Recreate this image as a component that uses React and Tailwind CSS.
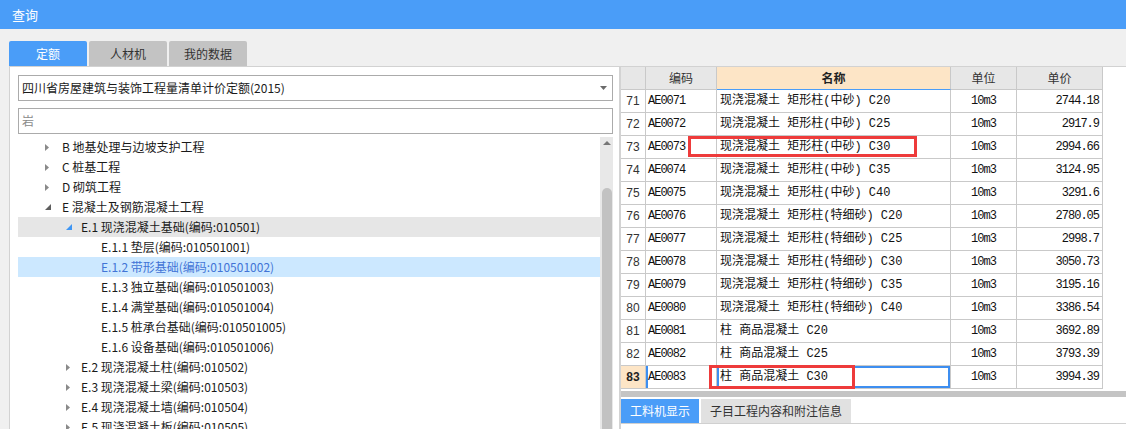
import React from "react";

const treeRows = [
  { lvl: 0, caret: "right", text: "B 地基处理与边坡支护工程" },
  { lvl: 0, caret: "right", text: "C 桩基工程" },
  { lvl: 0, caret: "right", text: "D 砌筑工程" },
  { lvl: 0, caret: "open", text: "E 混凝土及钢筋混凝土工程" },
  { lvl: 1, caret: "openBlue", text: "E.1 现浇混凝土基础(编码:010501)", hover: true },
  { lvl: 2, text: "E.1.1 垫层(编码:010501001)" },
  { lvl: 2, text: "E.1.2 带形基础(编码:010501002)", selected: true },
  { lvl: 2, text: "E.1.3 独立基础(编码:010501003)" },
  { lvl: 2, text: "E.1.4 满堂基础(编码:010501004)" },
  { lvl: 2, text: "E.1.5 桩承台基础(编码:010501005)" },
  { lvl: 2, text: "E.1.6 设备基础(编码:010501006)" },
  { lvl: 1, caret: "right", text: "E.2 现浇混凝土柱(编码:010502)" },
  { lvl: 1, caret: "right", text: "E.3 现浇混凝土梁(编码:010503)" },
  { lvl: 1, caret: "right", text: "E.4 现浇混凝土墙(编码:010504)" },
  { lvl: 1, caret: "right", text: "E.5 现浇混凝土板(编码:010505)" },
];

const tableRows = [
  ["71", "AE0071", "现浇混凝土 矩形柱(中砂) C20", "10m3", "2744.18"],
  ["72", "AE0072", "现浇混凝土 矩形柱(中砂) C25", "10m3", "2917.9"],
  ["73", "AE0073", "现浇混凝土 矩形柱(中砂) C30", "10m3", "2994.66"],
  ["74", "AE0074", "现浇混凝土 矩形柱(中砂) C35", "10m3", "3124.95"],
  ["75", "AE0075", "现浇混凝土 矩形柱(中砂) C40", "10m3", "3291.6"],
  ["76", "AE0076", "现浇混凝土 矩形柱(特细砂) C20", "10m3", "2780.05"],
  ["77", "AE0077", "现浇混凝土 矩形柱(特细砂) C25", "10m3", "2998.7"],
  ["78", "AE0078", "现浇混凝土 矩形柱(特细砂) C30", "10m3", "3050.73"],
  ["79", "AE0079", "现浇混凝土 矩形柱(特细砂) C35", "10m3", "3195.16"],
  ["80", "AE0080", "现浇混凝土 矩形柱(特细砂) C40", "10m3", "3386.54"],
  ["81", "AE0081", "柱 商品混凝土 C20", "10m3", "3692.89"],
  ["82", "AE0082", "柱 商品混凝土 C25", "10m3", "3793.39"],
  ["83", "AE0083", "柱 商品混凝土 C30", "10m3", "3994.39"],
];

function Caret({ type }) {
  if (type === "right")
    return (
      <svg width="4" height="7" viewBox="0 0 4 7">
        <path d="M0 0L4 3.5L0 7Z" fill="#8a8a8a" />
      </svg>
    );
  if (type === "open")
    return (
      <svg width="6" height="6" viewBox="0 0 6 6">
        <path d="M6 0V6H0Z" fill="#5e5e5e" />
      </svg>
    );
  return (
    <svg width="6" height="6" viewBox="0 0 6 6">
      <path d="M6 0V6H0Z" fill="#3f96f4" />
    </svg>
  );
}

function TreeRow({ row }) {
  const bg = row.selected ? "bg-[#cce8ff]" : row.hover ? "bg-[#e6e6e6]" : "";
  const color = row.selected ? "text-[#4274d6]" : "text-[#1a1a1a]";
  return (
    <div className={`h-[20px] flex items-center whitespace-nowrap ${bg}`}>
      {row.lvl === 0 && (
        <div className="ml-[27px] w-[17px] flex items-center">
          <Caret type={row.caret} />
        </div>
      )}
      {row.lvl === 1 && (
        <div className="ml-[48px] w-[15px] flex items-center">
          <Caret type={row.caret} />
        </div>
      )}
      {row.lvl === 2 && <div className="ml-[83px]" />}
      <span className={`text-[12px] leading-[20px] ${color}`}>{row.text}</span>
    </div>
  );
}

const mono = "font-['Liberation_Mono',monospace] text-[12px] tracking-[-1px] text-[#111]";
const nameFont = "font-['Liberation_Mono','Noto_Sans_CJK_SC',monospace] text-[12px] text-[#111]";

export default function App() {
  return (
    <div className="w-[1126px] h-[429px] overflow-hidden bg-[#f0f0f0] font-['Noto_Sans_CJK_SC','Noto_Sans',sans-serif] flex flex-col">
      {/* title bar */}
      <div className="h-[29px] shrink-0 bg-[#4a9df8] flex items-center pl-[12px] text-white text-[13px]">
        查询
      </div>

      {/* tabs */}
      <div className="mt-[12px] h-[25px] shrink-0 pl-[9px] flex gap-[2px]">
        <div className="w-[78px] h-full rounded-t-[2px] bg-[#4a9df8] text-white text-[12px] flex items-center justify-center">
          定额
        </div>
        <div className="w-[78px] h-full rounded-t-[2px] bg-[#c3c3c3] text-[#333] text-[12px] flex items-center justify-center">
          人材机
        </div>
        <div className="w-[78px] h-full rounded-t-[2px] bg-[#c3c3c3] text-[#333] text-[12px] flex items-center justify-center">
          我的数据
        </div>
      </div>

      {/* content */}
      <div className="flex-1 min-h-0 ml-[9px] border-l border-t border-[#d2d2d2] bg-white flex">
        {/* left panel */}
        <div className="w-[609px] shrink-0 flex flex-col pt-[8px] pl-[8px] pr-[6px] min-h-0">
          <div className="h-[26px] shrink-0 border border-[#ababab] flex items-center justify-between pl-[3px] pr-[5px]">
            <span className="text-[12px] text-[#1a1a1a] whitespace-nowrap">四川省房屋建筑与装饰工程量清单计价定额(2015)</span>
            <svg width="7" height="4" viewBox="0 0 7 4">
              <path d="M0 0H7L3.5 4Z" fill="#6b6b6b" />
            </svg>
          </div>
          <div className="mt-[7px] h-[26px] shrink-0 border border-[#ababab] flex items-center pl-[3px]">
            <span className="text-[12px] text-[#8a8a8a]">岩</span>
          </div>
          <div className="mt-[3px] flex-1 min-h-0 flex overflow-hidden">
            <div className="flex-1 min-w-0 overflow-hidden">
              {treeRows.map((r, i) => (
                <TreeRow key={i} row={r} />
              ))}
            </div>
            <div className="w-[13px] shrink-0 bg-[#e8e8e8] flex flex-col items-center">
              <div className="mt-[4px]">
                <svg width="8" height="4" viewBox="0 0 8 4">
                  <path d="M0 4H8L4 0Z" fill="#767676" />
                </svg>
              </div>
              <div className="mt-[43px] w-[10px] flex-1 rounded-t-[5px] bg-[#c2c2c2]" />
            </div>
          </div>
        </div>

        {/* separator */}
        <div className="w-[2px] shrink-0 bg-[#d3d3d3]" />

        {/* right panel */}
        <div className="flex-1 min-w-0 flex flex-col relative bg-white">
          <div className="w-[482px]">
            {/* header */}
            <div className="flex h-[23px]">
              <div className="w-[25px] bg-[#e7e7e7] border-r border-b border-[#c9c9c9]" />
              <div className="w-[71px] bg-[#e7e7e7] border-r border-b border-[#c9c9c9] flex items-center justify-center text-[12px] text-[#333]">
                编码
              </div>
              <div className="w-[234px] bg-[#fde5c6] border-r border-[#c9c9c9] border-b border-b-[#4a9df8] flex items-center justify-center text-[12px] font-bold text-[#222]">
                名称
              </div>
              <div className="w-[66px] bg-[#e7e7e7] border-r border-b border-[#c9c9c9] flex items-center justify-center text-[12px] text-[#333]">
                单位
              </div>
              <div className="w-[86px] bg-[#e7e7e7] border-r border-b border-[#c9c9c9] flex items-center justify-center text-[12px] text-[#333]">
                单价
              </div>
            </div>
            {tableRows.map((r, i) => {
              const sel = r[0] === "83";
              return (
                <div key={i} className="flex h-[23px]">
                  <div
                    className={`w-[25px] border-r border-b border-[#c9c9c9] flex items-center justify-center font-['Liberation_Sans',sans-serif] text-[12px] ${
                      sel ? "bg-[#fde5c6] font-bold text-[#222]" : "text-[#333]"
                    }`}
                  >
                    {r[0]}
                  </div>
                  <div
                    className={`w-[71px] border-r border-b border-[#c9c9c9] flex items-center pl-[2px] ${mono} ${
                      sel ? "shadow-[inset_2px_0_0_#3d8ef0]" : ""
                    }`}
                  >
                    {r[1]}
                  </div>
                  <div
                    className={`w-[234px] border-r border-b border-[#c9c9c9] flex items-center pl-[3px] whitespace-nowrap ${nameFont} ${
                      sel ? "shadow-[inset_0_0_0_2px_#3d8ef0]" : ""
                    }`}
                  >
                    {r[2]}
                  </div>
                  <div className={`w-[66px] border-r border-b border-[#c9c9c9] flex items-center justify-center ${mono}`}>
                    {r[3]}
                  </div>
                  <div className={`w-[86px] border-r border-b border-[#c9c9c9] flex items-center justify-end pr-[3px] ${mono}`}>
                    {r[4]}
                  </div>
                </div>
              );
            })}
          </div>

          <div className="mt-[2px] h-[6px] shrink-0 bg-[#c4c4c4]" />
          <div className="mt-[2px] h-[25px] shrink-0 flex gap-[2px] border-b border-[#d0d0d0]">
            <div className="w-[78px] h-[24px] bg-[#4a9df8] text-white text-[12px] flex items-center justify-center">
              工料机显示
            </div>
            <div className="w-[150px] h-[24px] bg-[#e1e1e1] text-[#333] text-[12px] flex items-center justify-center">
              子目工程内容和附注信息
            </div>
          </div>

          {/* red annotation boxes */}
          <div className="absolute left-[67px] top-[69px] w-[229px] h-[21px] border-[3px] border-[#ee3b3b] pointer-events-none" />
          <div className="absolute left-[88px] top-[298px] w-[146px] h-[24px] border-[3px] border-[#ee3b3b] pointer-events-none" />
        </div>
      </div>
    </div>
  );
}
